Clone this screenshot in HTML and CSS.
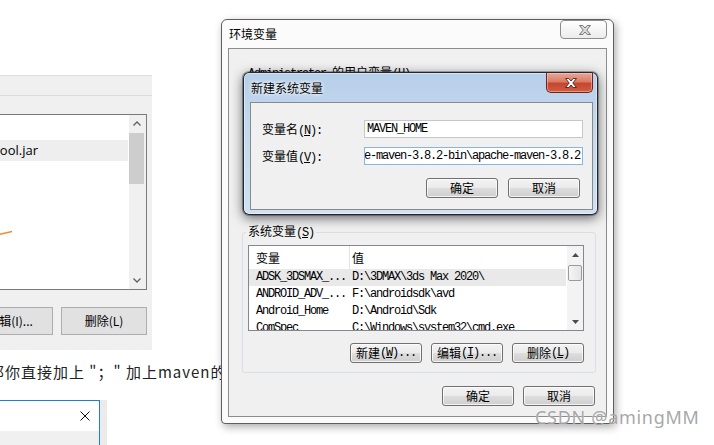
FILE: index.html
```html
<!DOCTYPE html>
<html lang="zh-CN">
<head>
<meta charset="utf-8">
<title>环境变量</title>
<link rel="stylesheet" href="styles.css">
</head>
<body>
<div class="desk">

  <section class="panel">
    <div class="panel-head"></div>
    <div class="pathlist">
      <div class="pathlist-rows">
        <div class="prow"></div>
        <div class="prow sel"><span>ool.jar</span></div>
      </div>
      <div class="vs10">
        <div class="vs10-btn"><svg width="8" height="5" viewBox="0 0 8 5"><path d="M0.5 4.5 L4 1 L7.5 4.5" fill="none" stroke="#606060" stroke-width="1.3"/></svg></div>
        <div class="vs10-thumb"></div>
        <div class="vs10-fill"></div>
        <div class="vs10-btn"><svg width="8" height="5" viewBox="0 0 8 5"><path d="M0.5 0.5 L4 4 L7.5 0.5" fill="none" stroke="#606060" stroke-width="1.3"/></svg></div>
      </div>
      <svg class="mark" width="16" height="8" viewBox="0 0 16 8"><path d="M0 5.2 L12 2.6" stroke="#f28a3a" stroke-width="1.5" fill="none"/></svg>
    </div>
    <div class="panel-btns">
      <button class="btn10">新建(N)</button>
      <button class="btn10">编辑(I)...</button>
      <button class="btn10">删除(L)</button>
    </div>
  </section>

  <p class="note">那你直接加上 "；" 加上maven的路径</p>

  <section class="win10b">
    <div class="win10b-title">
      <svg width="10" height="10" viewBox="0 0 10 10"><path d="M0.5 0.5 L9.5 9.5 M9.5 0.5 L0.5 9.5" stroke="#111" stroke-width="1"/></svg>
    </div>
    <div class="win10b-body"></div>
  </section>
  <div class="strip"></div>

  <section class="env">
    <header class="env-title">
      <h1>环境变量</h1>
      <div class="xbtn-gray">
        <svg width="12" height="10" viewBox="0 0 12 10"><polygon points="0.5,0.5 3.8,0.5 6,3 8.2,0.5 11.5,0.5 7.8,5 11.5,9.5 8.2,9.5 6,7 3.8,9.5 0.5,9.5 4.2,5" fill="#d9d9d9" stroke="#6d6d6d" stroke-width="0.9"/></svg>
      </div>
    </header>
    <div class="env-client">
      <fieldset class="grp grp-user">
        <legend><span class="m">Administrator </span>的用户变量<span class="m">(<u>U</u>)</span></legend>
      </fieldset>
      <fieldset class="grp grp-sys">
        <legend>系统变量<span class="m">(<u>S</u>)</span></legend>
        <div class="lv">
          <div class="lv-main">
            <div class="lv-head">
              <div class="c1">变量</div>
              <div class="c2">值</div>
            </div>
            <div class="lv-row sel"><div class="c1 m">ADSK_3DSMAX_...</div><div class="c2 m">D:\3DMAX\3ds Max 2020\</div></div>
            <div class="lv-row"><div class="c1 m">ANDROID_ADV_...</div><div class="c2 m">F:\androidsdk\avd</div></div>
            <div class="lv-row"><div class="c1 m">Android_Home</div><div class="c2 m">D:\Android\Sdk</div></div>
            <div class="lv-row"><div class="c1 m">ComSpec</div><div class="c2 m">C:\Windows\system32\cmd.exe</div></div>
          </div>
          <div class="vs7">
            <div class="vs7-btn"><svg width="7" height="4" viewBox="0 0 7 4"><polygon points="0,4 3.5,0 7,4" fill="#4a4a4a"/></svg></div>
            <div class="vs7-thumb"></div>
            <div class="vs7-fill"></div>
            <div class="vs7-btn"><svg width="7" height="4" viewBox="0 0 7 4"><polygon points="0,0 3.5,4 7,0" fill="#4a4a4a"/></svg></div>
          </div>
        </div>
        <div class="btn-row">
          <button class="btn7">新建<span class="m">(<u>W</u>)...</span></button>
          <button class="btn7">编辑<span class="m">(<u>I</u>)...</span></button>
          <button class="btn7">删除<span class="m">(<u>L</u>)</span></button>
        </div>
      </fieldset>
      <div class="env-actions">
        <button class="btn7">确定</button>
        <button class="btn7">取消</button>
      </div>
    </div>
  </section>

  <section class="newvar">
    <header class="nv-title">
      <h2>新建系统变量</h2>
      <div class="xbtn-red">
        <svg width="12" height="10" viewBox="0 0 12 10"><polygon points="0.5,0.5 3.8,0.5 6,3 8.2,0.5 11.5,0.5 7.8,5 11.5,9.5 8.2,9.5 6,7 3.8,9.5 0.5,9.5 4.2,5" fill="#ffffff" stroke="#5a1a10" stroke-width="0.9"/></svg>
      </div>
    </header>
    <div class="nv-client">
      <div class="nv-form">
        <label class="nv-label">变量名<span class="m">(<u>N</u>):</span></label>
        <div class="nv-input"><span class="m">MAVEN_HOME</span></div>
        <label class="nv-label">变量值<span class="m">(<u>V</u>):</span></label>
        <div class="nv-input focus"><span class="m">e-maven-3.8.2-bin\apache-maven-3.8.2</span></div>
      </div>
      <div class="nv-actions">
        <button class="btn7">确定</button>
        <button class="btn7">取消</button>
      </div>
    </div>
  </section>

  <div class="wm">CSDN @amingMM</div>
</div>
</body>
</html>
```
FILE: styles.css
```css
* { box-sizing: border-box; }
html, body { margin: 0; padding: 0; background: #fff; }
body { width: 714px; height: 445px; overflow: hidden; font-family: "Noto Sans CJK SC", "Noto Sans", sans-serif; color: #000; }
.desk { position: relative; width: 714px; height: 445px; overflow: hidden; background: #fff; }

.m { font-family: "Liberation Mono", "Noto Sans CJK SC", monospace; font-size: 12px; letter-spacing: -1.2px; }
u { text-decoration: underline; text-underline-offset: 1px; }

/* ---------- background Win10 panel ---------- */
.panel {
  position: absolute; left: -150px; top: 75px; width: 302px; height: 275px;
  background: #f0f0f0; border-top: 1px solid #dcdcdc;
  display: flex; flex-direction: column; align-items: flex-end; padding-right: 5px;
}
.panel-head { align-self: stretch; height: 20px; margin-right: -5px; border-bottom: 1px solid #dcdcdc; }
.pathlist {
  position: relative; margin-top: 18px; width: 287px; height: 176px;
  border: 1px solid #7a7a7a; background: #fff; display: flex;
}
.pathlist-rows { flex: 1; padding-top: 4px; }
.prow { height: 21px; margin-right: 1px; }
.prow.sel { background: #eeeeee; display: flex; align-items: center; justify-content: flex-end; padding-right: 90px; font: 13px/21px "Open Sans", "Noto Sans", sans-serif; }
.vs10 { width: 17px; background: #f0f0f0; display: flex; flex-direction: column; align-items: flex-start; }
.vs10-btn { width: 16px; height: 17px; display: flex; align-items: center; justify-content: center; }
.vs10-thumb { width: 15px; height: 51px; margin-top: 1px; background: #cdcdcd; }
.vs10-fill { flex: 1; }
.mark { position: absolute; left: 139px; top: 114px; }

.panel-btns { display: flex; gap: 8px; margin-top: 17px; }
.btn10 {
  width: 86px; height: 28px; padding: 0; background: #e1e1e1; border: 1px solid #adadad;
  font: 12px/1 "Noto Sans CJK SC", sans-serif; color: #000;
}

.note {
  position: absolute; left: -11px; top: 362px; margin: 0; white-space: nowrap;
  font: 15px/20px "Noto Sans CJK SC", sans-serif; color: #222; letter-spacing: 1px;
}

.win10b { position: absolute; left: -30px; top: 400px; width: 130px; height: 60px; background: #fff; border: 1px solid #1b7fd4; }
.win10b-title { height: 30px; display: flex; align-items: center; justify-content: flex-end; padding-right: 9px; }
.win10b-body { height: 40px; background: #f0f0f0; }
.strip { position: absolute; left: 100px; top: 400px; width: 7px; height: 45px; background: #ebebeb; }

/* ---------- Environment variables dialog (Win7) ---------- */
.env {
  position: absolute; left: 221px; top: 19px; width: 393px; height: 405px;
  border: 1px solid #5e5e5e; border-radius: 6px 6px 4px 4px; background: #fbfbfb;
  box-shadow: 2px 3px 9px rgba(0,0,0,.33);
  display: flex; flex-direction: column; padding: 0 6px 6px;
}
.env-title { height: 28px; display: flex; align-items: flex-start; }
.env-title h1 { flex: 1; margin: 6px 0 0 1px; font: normal 12px/16px "Noto Sans CJK SC", sans-serif; }
.xbtn-gray {
  width: 47px; height: 19px; border: 1px solid #8e8e8e; border-radius: 4px;
  background: linear-gradient(#ffffff, #ececec);
  display: flex; align-items: center; justify-content: center; padding-left: 3px;
}
.env-client { flex: 1; border: 1px solid #8c8c8c; background: #f0f0f0; display: flex; flex-direction: column; }

.grp { margin: 0 10px 0 13px; border: 1px solid #d5dfe5; border-radius: 3px; padding: 0 11px 11px 5px; min-width: 0; }
.grp legend { padding: 0 2px; margin-left: -2px; font: 12px/14px "Noto Sans CJK SC", sans-serif; }
.grp-user { margin-top: 16px; height: 148px; }
.grp-sys { margin-top: 11px; height: 149px; }

.lv { margin-top: 5px; width: 336px; height: 86px; border: 1px solid #828790; background: #fff; display: flex; overflow: hidden; }
.lv-main { flex: 1; overflow: hidden; }
.lv-head { display: flex; height: 23px; font: 12px/23px "Noto Sans CJK SC", sans-serif; }
.lv-head .c1 { border-right: 1px solid #e3e3e3; }
.lv-row { display: flex; height: 17px; line-height: 17px; white-space: nowrap; margin-right: 1px; }
.lv-row.sel { background: #e9e9e9; }
.c1 { width: 101px; flex: none; padding-left: 7px; overflow: hidden; }
.c2 { padding-left: 2px; white-space: nowrap; }
.vs7 { width: 16px; background: #f3f3f3; display: flex; flex-direction: column; align-items: center; }
.vs7-btn { height: 17px; width: 16px; display: flex; align-items: center; justify-content: center; }
.vs7-thumb { width: 14px; height: 16px; margin-top: 2px; border: 1px solid #9a9a9a; border-radius: 2px; background: linear-gradient(90deg, #f5f5f5, #e4e4e4); }
.vs7-fill { flex: 1; }

.btn-row { display: flex; justify-content: flex-end; gap: 9px; margin-top: 12px; }
.env-actions { display: flex; justify-content: flex-end; gap: 9px; margin-top: 13px; padding-right: 11px; }

.btn7 {
  width: 72px; height: 20px; padding: 0; border: 1px solid #707070; border-radius: 3px;
  background: linear-gradient(#f3f3f3 0%, #ebebeb 48%, #dddddd 52%, #cfcfcf 100%);
  box-shadow: inset 0 0 0 1px rgba(255,255,255,.75);
  font: 12px/1 "Noto Sans CJK SC", sans-serif; color: #000;
  display: flex; align-items: center; justify-content: center;
}

/* ---------- New system variable dialog (Aero) ---------- */
.newvar {
  position: absolute; left: 243px; top: 72px; width: 355px; height: 143px;
  border: 1px solid rgba(15,20,30,.9); border-radius: 6px;
  background: linear-gradient(180deg, #b7cfe9 0%, #c3d8ee 35%, #cfe1f3 100%);
  box-shadow: inset 0 0 0 1px rgba(255,255,255,.45), 0 0 0 1px rgba(0,0,0,.25), 0 3px 12px rgba(0,0,0,.6);
  display: flex; flex-direction: column; padding: 0 4px 4px 6px;
}
.nv-title { height: 29px; display: flex; align-items: flex-start; }
.nv-title h2 { flex: 1; margin: 7px 0 0 1px; font: normal 12px/16px "Noto Sans CJK SC", sans-serif; text-shadow: 0 0 5px #fff, 0 0 3px #fff; }
.xbtn-red {
  width: 47px; height: 20px; border: 1px solid #6e2418; border-top: none; border-radius: 0 0 5px 5px;
  background: linear-gradient(#e9a898 0%, #da7b66 45%, #c6462f 55%, #d05c3f 100%);
  box-shadow: inset 0 0 0 1px rgba(255,220,210,.45);
  display: flex; align-items: center; justify-content: center; padding-left: 2px;
}
.nv-client { flex: 1; border: 1px solid #8a8a8a; background: #f0f0f0; padding: 17px 9px 11px 11px; display: flex; flex-direction: column; }
.nv-form { display: grid; grid-template-columns: 102px 219px; grid-auto-rows: 18px; row-gap: 9px; }
.nv-label { font: 12px/18px "Noto Sans CJK SC", sans-serif; white-space: nowrap; }
.nv-input {
  border: 1px solid #c4c7cc; background: #fff; overflow: hidden; white-space: nowrap;
  display: flex; align-items: center; padding: 0 2px;
}
.nv-input.focus { border-color: #86b5e6; justify-content: flex-end; padding-right: 2px; }
.nv-actions { display: flex; justify-content: flex-end; gap: 10px; margin-top: 13px; padding-right: 3px; }

.wm {
  position: absolute; left: 535px; top: 406px; white-space: nowrap;
  font: 18px/22px "Noto Sans", sans-serif; letter-spacing: 0.7px;
  color: rgba(150,150,150,.85); text-shadow: 0 0 1px rgba(255,255,255,.9);
}
```
